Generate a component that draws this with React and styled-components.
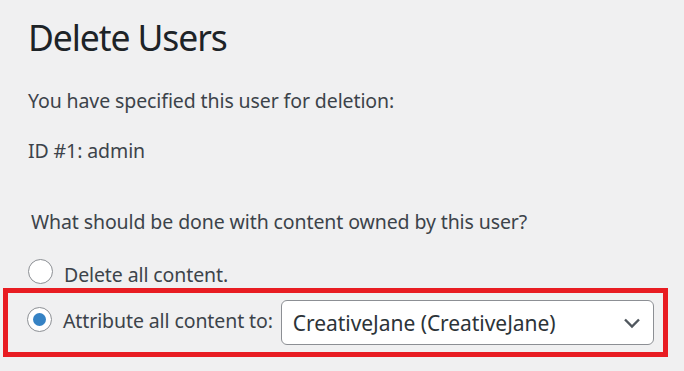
import React from 'react';
import styled, {createGlobalStyle} from 'styled-components';

const GlobalStyle = createGlobalStyle`
  html, body {
    margin: 0;
    padding: 0;
    background: #f0f0f1;
  }
  body {
    font-family: "Noto Sans", "Open Sans", sans-serif;
    color: #3c434a;
  }
`;

const Wrap = styled.div`
  width: 684px;
  height: 371px;
  box-sizing: border-box;
  padding: 13px 0 0 28px;
  overflow: hidden;
`;

const Title = styled.h1`
  margin: 0;
  font-size: 35.5px;
  line-height: 48px;
  letter-spacing: -1.1px;
  font-weight: 400;
  color: #1d2327;
`;

const Text = styled.p`
  margin: ${props => props.gap || 0}px 0 0;
  font-size: 19.5px;
  line-height: 30px;
  letter-spacing: -0.1px;
  color: #3c434a;
`;

const Legend = styled(Text)`
  padding-left: 3px;
`;

const Choice = styled.label`
  display: flex;
  align-items: flex-start;
  gap: 11px;
  margin-top: 23px;
  font-size: 19.5px;
  line-height: 30px;
  letter-spacing: -0.1px;
  color: #3c434a;
`;

const Radio = styled.span`
  flex: none;
  width: 25px;
  height: 25px;
  box-sizing: border-box;
  margin-top: ${props => props.offset}px;
  border: 1px solid #8c8f94;
  border-radius: 50%;
  background: #fff;
  display: flex;
  align-items: center;
  justify-content: center;

  &::after {
    content: '';
    display: ${props => (props.checked ? 'block' : 'none')};
    width: 13px;
    height: 13px;
    border-radius: 50%;
    background: #3582c4;
  }
`;

const Highlight = styled.div`
  display: flex;
  align-items: flex-start;
  width: 665px;
  box-sizing: border-box;
  margin: -2px 0 0 -25px;
  padding: 7px 9px 7px 19px;
  border: 5px solid #e81c22;
  font-size: 19.5px;
  line-height: 30px;
  letter-spacing: -0.1px;
  color: #3c434a;
`;

const RowLabel = styled.span`
  margin: 6px 8px 0 11px;
  white-space: nowrap;
`;

const Select = styled.div`
  flex: 1;
  height: 45px;
  box-sizing: border-box;
  display: flex;
  align-items: center;
  justify-content: space-between;
  padding: 0 12px 0 11px;
  border: 1px solid #8c8f94;
  border-radius: 6px;
  background: #fff;
  color: #2c3338;
  font-size: 21px;
  letter-spacing: -0.05px;
`;

const Chevron = () => (
  <svg width="18" height="12" viewBox="0 0 18 12">
    <path d="M2 2.5 L9 9.5 L16 2.5" fill="none" stroke="#50575e" strokeWidth="2.4" />
  </svg>
);

export default function App() {
  return (
    <>
      <GlobalStyle />
      <Wrap>
        <Title>Delete Users</Title>
        <Text gap={25}>You have specified this user for deletion:</Text>
        <Text gap={20}>ID #1: admin</Text>
        <Legend gap={41}>What should be done with content owned by this user?</Legend>
        <Choice>
          <Radio offset={-1} />
          <span>Delete all content.</span>
        </Choice>
        <Highlight>
          <Radio offset={7} checked />
          <RowLabel>Attribute all content to:</RowLabel>
          <Select>
            <span>CreativeJane (CreativeJane)</span>
            <Chevron />
          </Select>
        </Highlight>
      </Wrap>
    </>
  );
}
